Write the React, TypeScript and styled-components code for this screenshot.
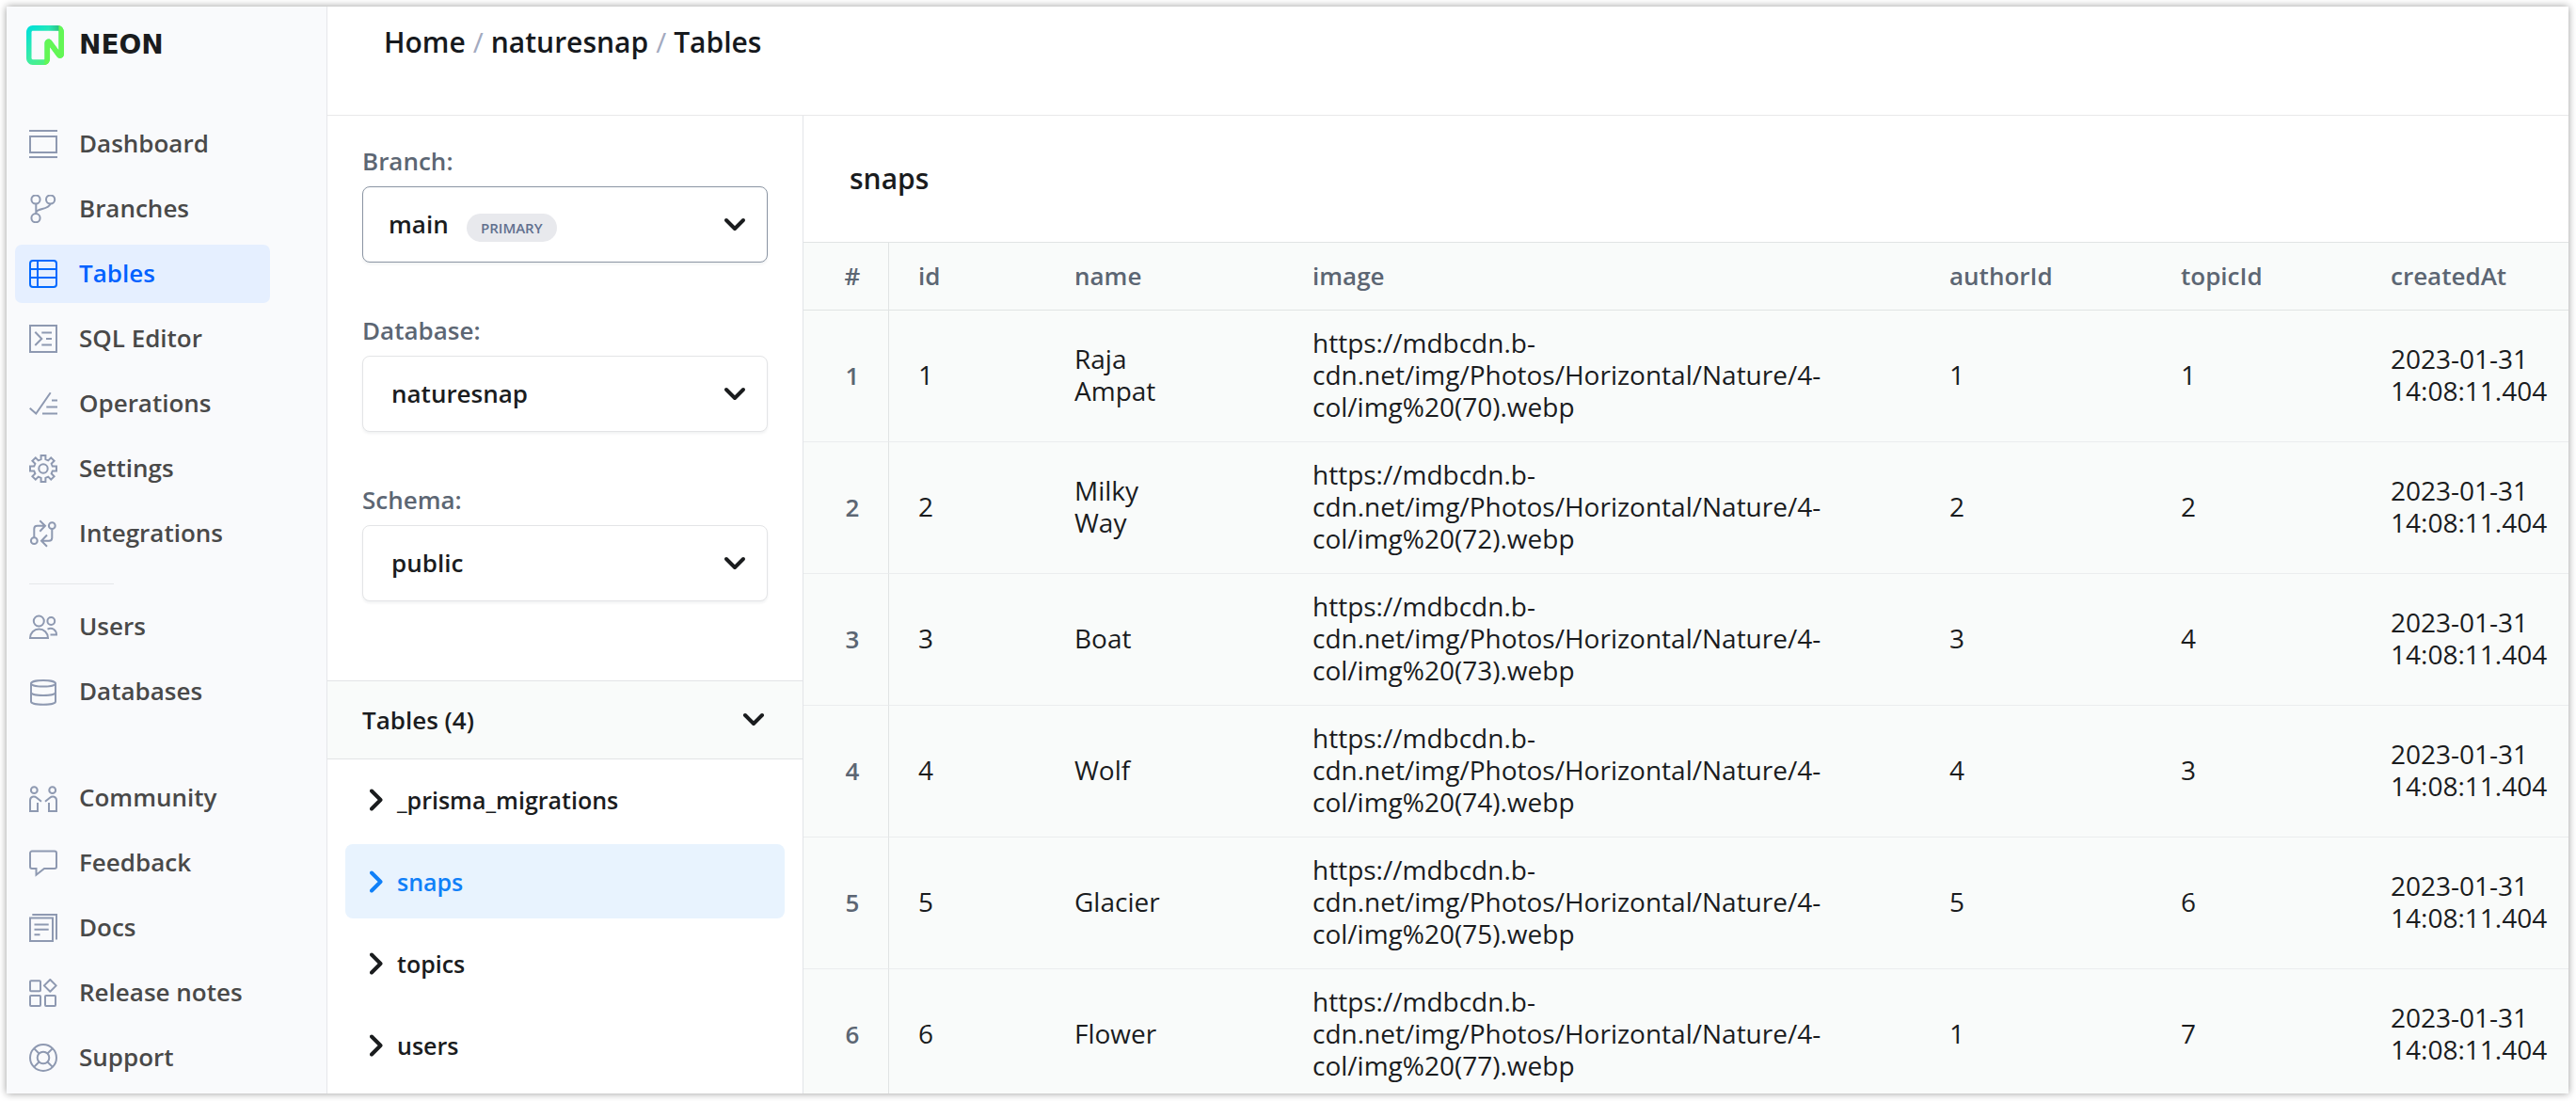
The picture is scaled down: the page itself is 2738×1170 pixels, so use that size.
import React from 'react';
import styled, { createGlobalStyle } from 'styled-components';

const GlobalStyle = createGlobalStyle`
  *, *::before, *::after { box-sizing: border-box; }
  html, body, #root { height: 100%; }
  body {
    margin: 0;
    padding: 7px 8px 8px 7px;
    background: #fff;
    font-family: 'Open Sans', 'Noto Sans', sans-serif;
    font-size: 26px;
    font-weight: 600;
    line-height: 34px;
    color: #1a1c1e;
  }
  a { color: inherit; text-decoration: none; }
  button, select { font: inherit; color: inherit; }
`;

const Frame = styled.div`
  display: flex;
  height: 100%;
  overflow: hidden;
  background: #fff;
  box-shadow: 0 0 8px rgba(0, 0, 0, 0.4);
`;

/* Sidebar */

const Sidebar = styled.aside`
  flex: 0 0 341px;
  padding: 20px 60px 0 9px;
  background: #f9fafc;
  border-right: 1px solid #e6e7ea;
`;

const Brand = styled.a`
  display: flex;
  align-items: center;
  gap: 16px;
  height: 42px;
  margin: 0 0 53px 12px;
  font-family: 'DejaVu Sans', sans-serif;
  font-size: 28px;
  font-weight: 700;
`;

const NavGroup = styled.nav<{ $top?: number }>`
  display: flex;
  flex-direction: column;
  gap: 7px;
  margin-top: ${(p) => p.$top ?? 0}px;
`;

const NavLink = styled.a<{ $active?: boolean }>`
  display: flex;
  align-items: center;
  gap: 23px;
  height: 62px;
  padding-left: 15px;
  border-radius: 7px;
  background: ${(p) => (p.$active ? '#e5efff' : 'transparent')};
  color: ${(p) => (p.$active ? '#0062ff' : '#494949')};

  svg {
    color: ${(p) => (p.$active ? '#0069ff' : '#8e99b1')};
  }
`;

const NavText = styled.span`
  padding-bottom: 2px;
`;

const Divider = styled.hr`
  width: 90px;
  height: 1px;
  margin: 22px 0 14px 15px;
  border: 0;
  background: #e5e7ea;
`;

/* Page */

const Page = styled.div`
  flex: 1;
  min-width: 0;
  display: flex;
  flex-direction: column;
`;

const Header = styled.header`
  height: 116px;
  padding: 17px 60px 0;
  border-bottom: 1px solid #e8e8ea;
`;

const Breadcrumbs = styled.nav`
  display: flex;
  gap: 8px;
  font-size: 30px;
  line-height: 42px;
  color: #16191d;
`;

const Slash = styled.span`
  color: #a3aabf;
  font-weight: 400;
`;

const Columns = styled.div`
  flex: 1;
  min-height: 0;
  display: flex;
`;

const Panel = styled.section`
  flex: 0 0 506px;
  border-right: 1px solid #e2e4e8;
`;

const Filters = styled.div`
  display: flex;
  flex-direction: column;
  gap: 55px;
  height: 600px;
  padding: 31px 37px 0;
`;

const Field = styled.div`
  display: flex;
  flex-direction: column;
  gap: 10px;
`;

const Label = styled.label`
  color: #5c6673;
`;

const SelectWrap = styled.div`
  position: relative;

  > svg {
    position: absolute;
    top: 33px;
    right: 23px;
    pointer-events: none;
  }
`;

const Select = styled.select<{ $strong?: boolean }>`
  display: block;
  appearance: none;
  width: 100%;
  height: 81px;
  padding: 0 60px 2px ${(p) => (p.$strong ? 27 : 30)}px;
  border: 1px solid ${(p) => (p.$strong ? '#8b95a3' : '#e3e4e6')};
  border-radius: 8px;
  background: #fff;
  box-shadow: 0 2px 3px rgba(20, 30, 50, 0.06);
  outline: none;
`;

const Badge = styled.span`
  position: absolute;
  top: 29px;
  left: 111px;
  padding: 0 15px;
  border-radius: 15px;
  background: #e8e9ed;
  color: #61708f;
  font-size: 15px;
  line-height: 30px;
  pointer-events: none;
`;

const PanelBar = styled.button`
  display: flex;
  align-items: center;
  justify-content: space-between;
  width: 100%;
  height: 84px;
  padding: 0 40px 0 37px;
  border: solid #e2e4e6;
  border-width: 1px 0;
  background: #f9fbfa;
`;

const TableList = styled.ul`
  display: flex;
  flex-direction: column;
  gap: 8px;
  margin: 0;
  padding: 3px 19px;
  list-style: none;
`;

const TableItem = styled.button<{ $active?: boolean }>`
  display: flex;
  align-items: center;
  gap: 15px;
  width: 100%;
  height: 79px;
  padding: 0 26px;
  border: 0;
  border-radius: 8px;
  background: ${(p) => (p.$active ? '#e8f3fe' : 'transparent')};
  color: ${(p) => (p.$active ? '#0f80f8' : '#1a1c1e')};
  font-size: 25px;
`;

/* Data */

const Main = styled.main`
  flex: 1;
  min-width: 0;
  overflow: hidden;
  background: #f9fbfa;
`;

const Title = styled.h1`
  margin: 0;
  padding: 46px 49px;
  background: #fff;
  font-size: 30px;
  font-weight: 600;
  line-height: 42px;
`;

const DataTable = styled.table`
  width: 100%;
  table-layout: fixed;
  border-collapse: separate;
  border-spacing: 0;
`;

const Col = styled.col<{ $width?: number }>`
  width: ${(p) => (p.$width ? `${p.$width}px` : 'auto')};
`;

const HeadCell = styled.th`
  height: 73px;
  padding: 0 0 2px 31px;
  border: solid #e1e4e4;
  border-width: 1px 0;
  color: #5c6673;
  font-weight: 600;
  text-align: left;

  &:first-child {
    padding: 0 24px 2px 38px;
    border-right-width: 1px;
    text-align: center;
  }
`;

const RowHead = styled.th`
  padding: 0 24px 2px 38px;
  border-right: 1px solid #e1e4e4;
  border-bottom: 1px solid #ebedee;
  color: #5c6673;
  font-weight: 600;
`;

const Cell = styled.td`
  height: 140px;
  padding: 0 104px 3px 31px;
  border-bottom: 1px solid #ebedee;
  font-size: 28px;
  font-weight: 400;
  line-height: 34px;

  &:last-child {
    padding-right: 16px;
  }
`;

/* Icons */

const Icon = ({ children }: { children: React.ReactNode }) => (
  <svg width="30" height="30" viewBox="0 0 30 30" fill="none" stroke="currentColor" strokeWidth="2" aria-hidden="true">
    {children}
  </svg>
);

const gearPath = (() => {
  const tooth = [[-2.4, -9.8], [-2.4, -14], [2.4, -14], [2.4, -9.8]];
  const points: string[] = [];
  for (let i = 0; i < 8; i += 1) {
    const a = (i * Math.PI) / 4;
    tooth.forEach(([x, y]) => {
      const px = 15 + x * Math.cos(a) - y * Math.sin(a);
      const py = 15 + x * Math.sin(a) + y * Math.cos(a);
      points.push(`${px.toFixed(2)} ${py.toFixed(2)}`);
    });
  }
  return `M${points.join('L')}Z`;
})();

const icons = {
  dashboard: <path d="M0 1h30M0 29h30M1 7h28v17H1z" />,
  branches: (
    <>
      <circle cx="7" cy="5" r="4.6" />
      <circle cx="22.6" cy="5" r="4.6" />
      <circle cx="7" cy="24.7" r="4.6" />
      <path d="M7.3 10v10M7.5 18.5c1.5-4.5 13-2.500 15-8.800" />
    </>
  ),
  tables: (
    <>
      <rect x="1" y="1" width="28" height="28" rx="3" />
      <path d="M9 1v28M1 10h28M1 19h28" />
    </>
  ),
  sql: <path d="M1 1h28v28H1zM6.300 7.700l7 7.300-7 7M13.300 8.500H24M18 15h6M13.300 21.500H24" />,
  operations: <path d="M.7 19.700l6.600 5.800L22.700 3.300M24 11.500h6M18.300 18.500H30M14 25.500h16" />,
  settings: (
    <>
      <circle cx="15" cy="15" r="4.700" />
      <path d={gearPath} />
    </>
  ),
  integrations: (
    <>
      <circle cx="24.300" cy="6.700" r="3.400" />
      <circle cx="5.300" cy="22.700" r="3.400" />
      <path d="M5.300 19v-9q0-3.300 3.300-3.300H16M11.300 1.300L17 6.700l-5.700 6M24.300 10.500v9q0 3.200-3.300 3.200h-7M19 16.500l-6 6.200 6 6" />
    </>
  ),
  users: (
    <>
      <circle cx="10.300" cy="9" r="5.500" />
      <circle cx="23.300" cy="9" r="3.900" />
      <path d="M1 27a9.500 9.500 0 0 1 19 0zM19.500 17.600c5-2.500 9.500 1 9.500 5.900H22.500" />
    </>
  ),
  databases: (
    <>
      <ellipse cx="15" cy="6.300" rx="13" ry="3.300" />
      <path d="M2 6.300V25.500c0 4.400 26 4.400 26 0V6.300M2 15.800c0 4.400 26 4.400 26 0" />
    </>
  ),
  community: (
    <>
      <circle cx="5.300" cy="6.700" r="3.400" />
      <circle cx="24.700" cy="6.700" r="3.400" />
      <path d="M9 20v9H1V17.500c0-4 4.200-5 7-2.700l5 4M21 20v9h8V17.500c0-4-4.200-5-7-2.700l-5 4" />
    </>
  ),
  feedback: <path d="M3 2.500h24a2 2 0 0 1 2 2V19a2 2 0 0 1-2 2H16l-8.500 6.700V21H3a2 2 0 0 1-2-2V4.500a2 2 0 0 1 2-2z" />,
  docs: <path d="M1 4.500h24V29H1zM3.300 1H29v26.500M5.500 11.500h15.200M5.500 16.700h15.200M5.500 22.300h6" />,
  release: (
    <>
      <rect x="1" y="2.300" width="11" height="11" rx="1" />
      <rect x="1" y="18" width="11" height="11" rx="1" />
      <rect x="17" y="18" width="11" height="11" rx="1" />
      <path d="M22.300 1l6.400 6.400-6.400 6.400-6.400-6.400z" strokeLinejoin="round" />
    </>
  ),
  support: (
    <>
      <circle cx="15" cy="15" r="14" />
      <circle cx="15" cy="15" r="6.300" />
      <path d="M5.100 5.100l5.400 5.400M24.900 5.100l-5.400 5.400M5.100 24.900l5.400-5.400M24.900 24.900l-5.400-5.400" />
    </>
  ),
};

const ChevronDown = () => (
  <svg width="24" height="16" viewBox="0 0 24 16" fill="none" stroke="currentColor" strokeWidth="4" strokeLinecap="round" strokeLinejoin="round" aria-hidden="true">
    <path d="M3 3l9 9 9-9" />
  </svg>
);

const ChevronRight = () => (
  <svg width="14" height="24" viewBox="0 0 14 24" fill="none" stroke="currentColor" strokeWidth="4" strokeLinecap="round" strokeLinejoin="round" aria-hidden="true">
    <path d="M2 2.500l9.500 9.500L2 21.500" />
  </svg>
);

const Logo = () => (
  <svg width="40" height="42" viewBox="0 0 64 64" preserveAspectRatio="none" fill="none" aria-hidden="true">
    <defs>
      <linearGradient id="logo-base" x1="63" y1="64" x2="7" y2="0" gradientUnits="userSpaceOnUse">
        <stop stopColor="#62f755" />
        <stop offset="0.500" stopColor="#40eda0" />
        <stop offset="1" stopColor="#00e0d9" />
      </linearGradient>
      <linearGradient id="logo-shade" x1="63" y1="10" x2="22" y2="10" gradientUnits="userSpaceOnUse">
        <stop stopColor="#1a8a50" stopOpacity="0.600" />
        <stop offset="0.600" stopColor="#1a8a50" stopOpacity="0" />
      </linearGradient>
    </defs>
    <path
      fill="url(#logo-base)"
      fillRule="evenodd"
      d="M0 11.016C0 4.932 4.932 0 11.016 0h41.969C59.069 0 64 4.932 64 11.016v35.600c0 6.293-7.965 9.025-11.828 4.056L40.065 35.095v18.887C40.065 59.457 35.627 64 30.152 64H11.016C4.932 64 0 59.068 0 52.984V11.016Zm11.016-2.203c-1.217 0-2.203.986-2.203 2.203v41.968c0 1.220.986 2.204 2.203 2.204h19.439c.608 0 .777-.493.777-1.102V28.760c0-6.294 7.965-9.026 11.829-4.056l12.107 15.577V11.016c0-1.217.115-2.203-1.102-2.203H11.016Z"
    />
    <path fill="url(#logo-shade)" d="M30 0h26v8.800H30zM20 55.200h11.200V64H20z" />
    <path
      fill="#63f655"
      d="M54 0C59.500 0 64 4.932 64 11.016v35.600c0 6.293-7.965 9.025-11.828 4.056L40.065 35.095v18.887C40.065 59.515 35.580 64 30.047 64c.609 0 1.102-.493 1.102-1.102V28.760c0-6.294 7.965-9.026 11.829-4.056l12.107 15.577V2.203C55.085.986 54.900 0 54 0Z"
    />
  </svg>
);

/* Content */

type NavItem = { label: string; icon: keyof typeof icons };

const projectNav: NavItem[] = [
  { label: 'Dashboard', icon: 'dashboard' },
  { label: 'Branches', icon: 'branches' },
  { label: 'Tables', icon: 'tables' },
  { label: 'SQL Editor', icon: 'sql' },
  { label: 'Operations', icon: 'operations' },
  { label: 'Settings', icon: 'settings' },
  { label: 'Integrations', icon: 'integrations' },
];

const dataNav: NavItem[] = [
  { label: 'Users', icon: 'users' },
  { label: 'Databases', icon: 'databases' },
];

const helpNav: NavItem[] = [
  { label: 'Community', icon: 'community' },
  { label: 'Feedback', icon: 'feedback' },
  { label: 'Docs', icon: 'docs' },
  { label: 'Release notes', icon: 'release' },
  { label: 'Support', icon: 'support' },
];

const tables = ['_prisma_migrations', 'snaps', 'topics', 'users'];

const imageUrl = (n: number) => `https://mdbcdn.b-cdn.net/img/Photos/Horizontal/Nature/4-col/img%20(${n}).webp`;
const createdAt = '2023-01-31 14:08:11.404';

const rows = [
  { id: 1, name: 'Raja Ampat', image: 70, authorId: 1, topicId: 1 },
  { id: 2, name: 'Milky Way', image: 72, authorId: 2, topicId: 2 },
  { id: 3, name: 'Boat', image: 73, authorId: 3, topicId: 4 },
  { id: 4, name: 'Wolf', image: 74, authorId: 4, topicId: 3 },
  { id: 5, name: 'Glacier', image: 75, authorId: 5, topicId: 6 },
  { id: 6, name: 'Flower', image: 77, authorId: 1, topicId: 7 },
];

const NavItems = ({ items, label, top }: { items: NavItem[]; label: string; top?: number }) => (
  <NavGroup aria-label={label} $top={top}>
    {items.map((item) => (
      <NavLink key={item.label} href="#" $active={item.label === 'Tables'}>
        <Icon>{icons[item.icon]}</Icon>
        <NavText>{item.label}</NavText>
      </NavLink>
    ))}
  </NavGroup>
);

type PickerProps = { id: string; label: string; value: string; badge?: string };

const Picker = ({ id, label, value, badge }: PickerProps) => (
  <Field>
    <Label htmlFor={id}>{label}</Label>
    <SelectWrap>
      <Select id={id} defaultValue={value} $strong={Boolean(badge)}>
        <option>{value}</option>
      </Select>
      {badge && <Badge>{badge}</Badge>}
      <ChevronDown />
    </SelectWrap>
  </Field>
);

export default function App() {
  return (
    <>
      <GlobalStyle />
      <Frame>
        <Sidebar>
          <Brand href="#">
            <Logo />
            NEON
          </Brand>
          <NavItems label="Project" items={projectNav} />
          <Divider />
          <NavItems label="Data" items={dataNav} />
          <NavItems label="Help" items={helpNav} top={51} />
        </Sidebar>
        <Page>
          <Header>
            <Breadcrumbs aria-label="Breadcrumb">
              <a href="#">Home</a>
              <Slash>/</Slash>
              <a href="#">naturesnap</a>
              <Slash>/</Slash>
              <a href="#">Tables</a>
            </Breadcrumbs>
          </Header>
          <Columns>
            <Panel>
              <Filters>
                <Picker id="branch" label="Branch:" value="main" badge="PRIMARY" />
                <Picker id="database" label="Database:" value="naturesnap" />
                <Picker id="schema" label="Schema:" value="public" />
              </Filters>
              <PanelBar type="button">
                Tables (4)
                <ChevronDown />
              </PanelBar>
              <TableList>
                {tables.map((name) => (
                  <li key={name}>
                    <TableItem type="button" $active={name === 'snaps'}>
                      <ChevronRight />
                      {name}
                    </TableItem>
                  </li>
                ))}
              </TableList>
            </Panel>
            <Main>
              <Title>snaps</Title>
              <DataTable>
                <colgroup>
                  <Col $width={91} />
                  <Col $width={166} />
                  <Col $width={253} />
                  <Col />
                  <Col $width={246} />
                  <Col $width={223} />
                  <Col $width={220} />
                </colgroup>
                <thead>
                  <tr>
                    {['#', 'id', 'name', 'image', 'authorId', 'topicId', 'createdAt'].map((name) => (
                      <HeadCell key={name} scope="col">{name}</HeadCell>
                    ))}
                  </tr>
                </thead>
                <tbody>
                  {rows.map((row, index) => (
                    <tr key={row.id}>
                      <RowHead scope="row">{index + 1}</RowHead>
                      <Cell>{row.id}</Cell>
                      <Cell>{row.name}</Cell>
                      <Cell>{imageUrl(row.image)}</Cell>
                      <Cell>{row.authorId}</Cell>
                      <Cell>{row.topicId}</Cell>
                      <Cell>{createdAt}</Cell>
                    </tr>
                  ))}
                </tbody>
              </DataTable>
            </Main>
          </Columns>
        </Page>
      </Frame>
    </>
  );
}
